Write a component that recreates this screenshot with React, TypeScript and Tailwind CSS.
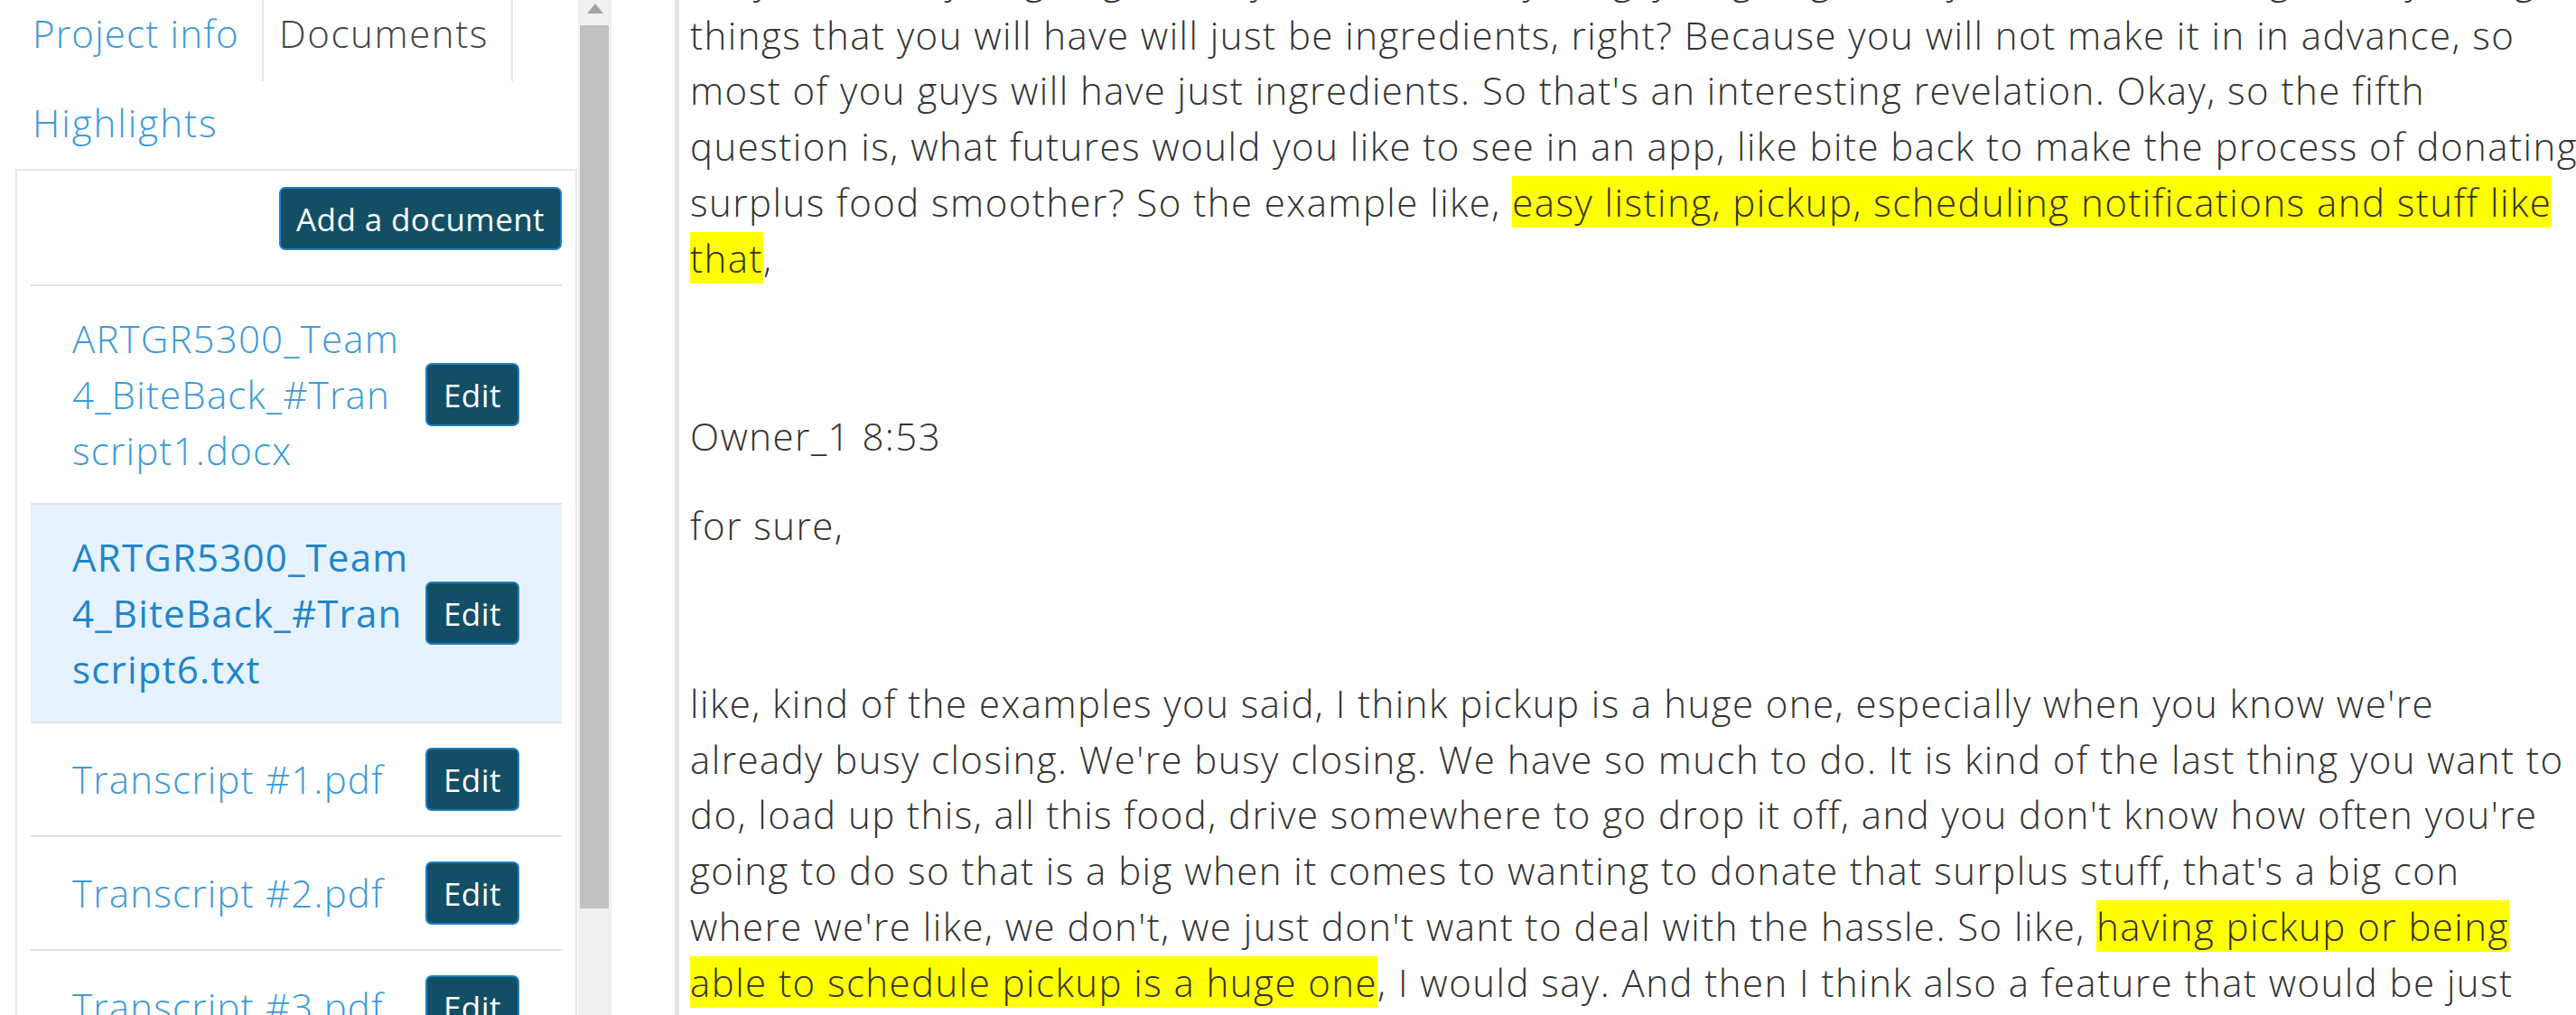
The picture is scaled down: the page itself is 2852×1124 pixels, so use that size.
import React from "react";

const HL = ({ children }: { children: React.ReactNode }) => (
  <span className="bg-[#ffff00]">{children}</span>
);

const EditBtn = () => (
  <button className="shrink-0 h-[70px] w-[104px] rounded-[7px] border-2 border-[#1d7fc1] bg-[#134f64] text-white text-[35px] tracking-[0.5px] font-normal leading-none">
    Edit
  </button>
);

type Doc = { lines: string[]; selected?: boolean };

const docs: Doc[] = [
  { lines: ["ARTGR5300_Team", "4_BiteBack_#Tran", "script1.docx"] },
  { lines: ["ARTGR5300_Team", "4_BiteBack_#Tran", "script6.txt"], selected: true },
  { lines: ["Transcript #1.pdf"] },
  { lines: ["Transcript #2.pdf"] },
  { lines: ["Transcript #3.pdf"] },
];

function LeftPanel() {
  return (
    <div className="flex w-[677px] shrink-0 h-[1124px] overflow-hidden tracking-[1.2px]">
      <div className="w-[640px] shrink-0 pl-[17px] pr-[1px]">
        {/* tabs row 1 */}
        <div className="flex h-[90px]">
          <div className="w-[273px] pl-[19px] pt-[6px] text-[#3d9ad8] leading-[62px] whitespace-nowrap">
            Project info
          </div>
          <div className="w-[278px] pl-[17px] pt-[6px] border-x-2 border-[#e6e6e6] text-[#444] leading-[62px] whitespace-nowrap tracking-[1.6px]">
            Documents
          </div>
        </div>
        {/* tabs row 2 */}
        <div className="h-[97px] pl-[19px] pt-[15px] text-[#3d9ad8] leading-[62px] tracking-[2px]">
          Highlights
        </div>
        {/* box */}
        <div className="w-[622px] border-2 border-b-0 border-[#e8e8e8] px-[15px] pt-[18px] h-[1000px]">
          <div className="flex justify-end">
            <button className="h-[70px] w-[313px] rounded-[7px] border-2 border-[#1d7fc1] bg-[#134f64] text-white text-[35px] tracking-[0.4px] font-normal leading-none whitespace-nowrap">
              Add a document
            </button>
          </div>
          <div className="mt-[38px]">
            {docs.map((d, i) => (
              <div
                key={i}
                className={
                  "flex items-center justify-between border-t-2 border-[#e3e3e3] pl-[46px] pr-[47px] py-[27px] " +
                  (d.selected ? "bg-[#e6f2fd]" : "bg-white")
                }
              >
                <div
                  className={
                    "leading-[62px] whitespace-nowrap " +
                    (d.selected ? "text-[#2185cb] font-normal" : "text-[#3d9ad8]")
                  }
                >
                  {d.lines.map((l, j) => (
                    <div key={j}>{l}</div>
                  ))}
                </div>
                <EditBtn />
              </div>
            ))}
          </div>
        </div>
      </div>
      {/* scrollbar */}
      <div className="w-[37px] shrink-0 bg-[#f1f1f1] flex flex-col">
        <div className="h-[28px] flex justify-center pt-[4px]">
          <svg width="18" height="11" viewBox="0 0 18 11">
            <polygon points="9,0 18,11 0,11" fill="#a3a3a3" />
          </svg>
        </div>
        <div className="ml-[2px] w-[32px] h-[978px] bg-[#c1c1c1]" />
      </div>
    </div>
  );
}

function TextArea() {
  const para1 = [
    <>so, you know, just going to be, you know, everything, just going to be just the main things that you'd guess</>,
    <>things that you will have will just be ingredients, right? Because you will not make it in in advance, so</>,
    <>most of you guys will have just ingredients. So that's an interesting revelation. Okay, so the fifth</>,
    <>question is, what futures would you like to see in an app, like bite back to make the process of donating</>,
    <>
      surplus food smoother? So the example like,{" "}
      <HL>easy listing, pickup, scheduling notifications and stuff like</HL>
    </>,
    <>
      <HL>that</HL>,
    </>,
  ];
  const para2 = [
    <>like, kind of the examples you said, I think pickup is a huge one, especially when you know we're</>,
    <>already busy closing. We're busy closing. We have so much to do. It is kind of the last thing you want to</>,
    <>do, load up this, all this food, drive somewhere to go drop it off, and you don't know how often you're</>,
    <>going to do so that is a big when it comes to wanting to donate that surplus stuff, that's a big con</>,
    <>
      where we're like, we don't, we just don't want to deal with the hassle. So like,{" "}
      <HL>having pickup or being</HL>
    </>,
    <>
      <HL>able to schedule pickup is a huge one</HL>, I would say. And then I think also a feature that would be just
    </>,
  ];
  return (
    <div className="flex-1 h-[1124px] overflow-hidden border-l-[5px] border-[#dfe5ec] pl-[12px] text-[#333]">
      <div className="mt-[-54px] flex flex-col gap-[37px] leading-[61.7px] tracking-[1.45px]">
        <div>
          {para1.map((l, i) => (
            <div key={i} className="whitespace-nowrap">{l}</div>
          ))}
        </div>
        <div className="h-[61.7px]" />
        <div className="whitespace-nowrap">Owner_1 8:53</div>
        <div className="whitespace-nowrap">for sure,</div>
        <div className="h-[61.7px]" />
        <div>
          {para2.map((l, i) => (
            <div key={i} className="whitespace-nowrap">{l}</div>
          ))}
        </div>
      </div>
    </div>
  );
}

export default function App() {
  return (
    <div className="w-[2852px] h-[1124px] overflow-hidden bg-white flex font-['Open_Sans',sans-serif] font-light text-[42px]">
      <LeftPanel />
      <div className="w-[70px] shrink-0" />
      <TextArea />
    </div>
  );
}
